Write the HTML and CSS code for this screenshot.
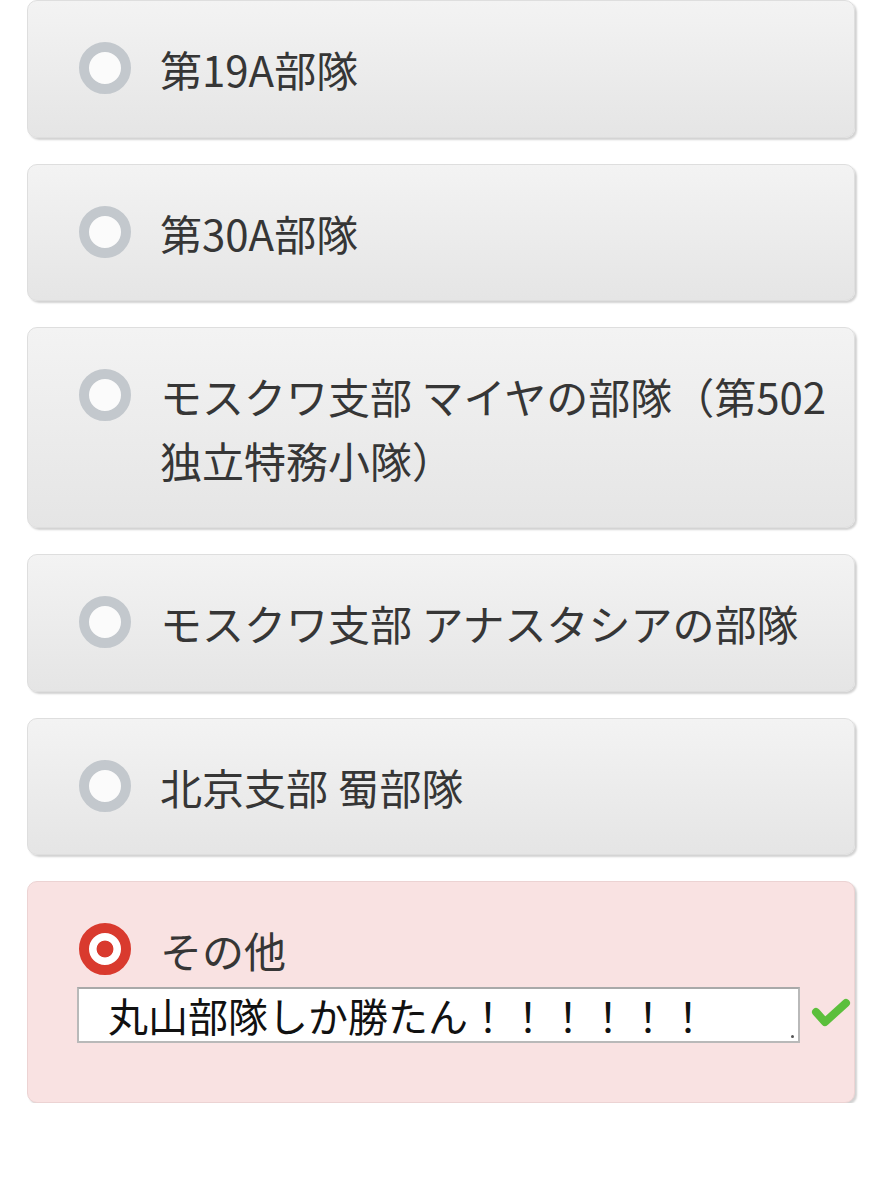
FILE: index.html
```html
<!DOCTYPE html>
<html lang="ja">
<head>
<meta charset="utf-8">
<link rel="stylesheet" href="styles.css">
</head>
<body>
<div class="list">
  <label class="card">
    <span class="row"><span class="radio"></span><span class="text">第19A部隊</span></span>
  </label>
  <label class="card">
    <span class="row"><span class="radio"></span><span class="text">第30A部隊</span></span>
  </label>
  <label class="card">
    <span class="row"><span class="radio"></span><span class="text">モスクワ支部 マイヤの部隊（第502独立特務小隊）</span></span>
  </label>
  <label class="card">
    <span class="row"><span class="radio"></span><span class="text">モスクワ支部 アナスタシアの部隊</span></span>
  </label>
  <label class="card">
    <span class="row"><span class="radio"></span><span class="text">北京支部 蜀部隊</span></span>
  </label>
  <div class="card selected">
    <span class="row"><span class="radio on"></span><span class="text">その他</span></span>
    <div class="other">
      <span class="box"><span class="value">丸山部隊しか勝たん！！！！！！</span><span class="grip"></span></span>
      <svg class="check" width="42" height="34" viewBox="0 0 42 34"><polyline points="6,16 15,26 36,7" fill="none" stroke="#5cbf3c" stroke-width="8" stroke-linecap="round" stroke-linejoin="round"/></svg>
    </div>
  </div>
</div>
</body>
</html>
```
FILE: styles.css
```css
html, body {
  margin: 0;
  padding: 0;
  background: #ffffff;
}
body {
  font-family: "Noto Sans CJK JP", "Noto Sans", sans-serif;
  color: #363636;
}
.list {
  display: flex;
  flex-direction: column;
  gap: 26px;
  padding: 0 39px 0 27px;
}
.card {
  display: block;
  box-sizing: border-box;
  width: 828px;
  padding: 36px 0 36px 51px;
  border: 1px solid #dedede;
  border-radius: 10px;
  background: linear-gradient(#f3f3f3, #e5e5e5);
  box-shadow: 2px 2px 2px rgba(0, 0, 0, 0.18);
}
.card.selected {
  background: #f9e2e2;
  border-color: #ecd3d3;
  padding-bottom: 59px;
}
.row {
  display: flex;
  align-items: flex-start;
}
.radio {
  flex-shrink: 0;
  box-sizing: border-box;
  width: 52px;
  height: 52px;
  margin-top: 5px;
  margin-right: 29px;
  border-radius: 50%;
  border: 10px solid #c3c8cd;
  background: #fbfbfb;
}
.radio.on {
  border-color: #d93a2e;
  background: radial-gradient(circle, #d93a2e 0 8px, #ffffff 8.8px);
}
.text {
  font-size: 42px;
  line-height: 63.5px;
}
.other {
  display: flex;
  align-items: center;
  margin-left: -2px;
  margin-top: 5.5px;
}
.box {
  position: relative;
  box-sizing: border-box;
  flex-shrink: 0;
  display: flex;
  align-items: center;
  width: 723px;
  height: 56px;
  padding-left: 29px;
  border: 2px solid #b9b9b9;
  border-top-color: #a9a9a9;
  background: #ffffff;
}
.value {
  font-size: 40px;
  line-height: 52px;
  color: #111111;
  white-space: nowrap;
}
.grip {
  position: absolute;
  right: 4px;
  bottom: 3px;
  width: 3px;
  height: 3px;
  border-radius: 50%;
  background: #555555;
}
.check {
  flex-shrink: 0;
  margin-left: 10px;
  margin-top: -4px;
}
```
